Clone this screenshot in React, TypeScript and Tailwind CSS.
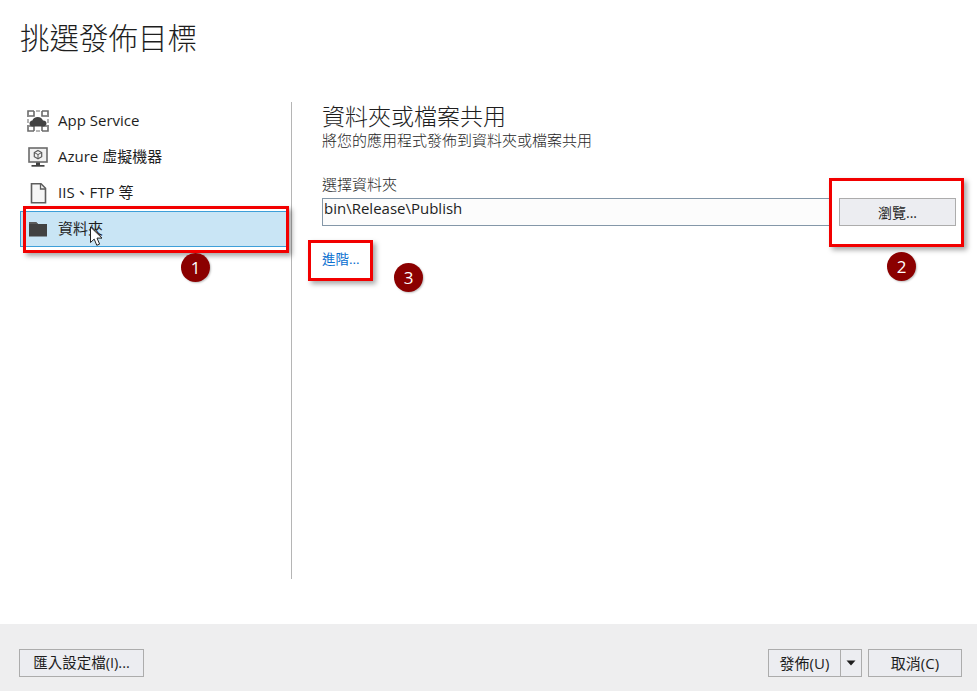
import React from "react";

const font = { fontFamily: '"Open Sans", "Noto Sans CJK TC", sans-serif' };

function AppServiceIcon() {
  return (
    <svg width="24" height="24" viewBox="0 0 24 24" fill="none">
      <g stroke="#6b6b6b" strokeWidth="1.6">
        <path d="M2 8V2h6M16 2h6v6M22 16v6h-6M8 22H2v-6" />
        <path d="M8 2v5H3M16 2v5h5M8 22v-5H3M16 22v-5h5" />
        <path d="M10 2h4M10 22h4M2 10v4M22 10v4" stroke="#a0a0a0" />
      </g>
      <path d="M7 17.500c-2.200 0-3.500-1.300-3.500-3 0-1.600 1.300-2.800 2.900-2.900C7 9.300 9.200 8 11.700 8c2.600 0 4.700 1.500 5.300 3.600 2-.1 3.500 1.200 3.500 3 0 1.600-1.400 2.900-3.200 2.900z" fill="#424242" />
    </svg>
  );
}

function VmIcon() {
  return (
    <svg width="24" height="24" viewBox="0 0 24 24" fill="none">
      <rect x="3" y="3" width="18" height="14" fill="#f1f1f1" stroke="#6b6b6b" strokeWidth="1.600" />
      <path d="M12 5.500l3.700 2v4.200L12 13.800l-3.700-2.100V7.500z" stroke="#5a5a5a" strokeWidth="1.200" />
      <path d="M8.300 7.500l3.700 2.100 3.700-2.100M12 9.600v4.200" stroke="#5a5a5a" strokeWidth="1" />
      <path d="M10 17.500h4v2.500h-4z" fill="#424242" />
      <path d="M5.500 20h13v1.700h-13z" fill="#424242" />
    </svg>
  );
}

function FileIcon() {
  return (
    <svg width="24" height="24" viewBox="0 0 24 24" fill="none">
      <path d="M5.500 2.800h9.500l4.500 4.500v14.500h-14z" fill="#f6f6f6" stroke="#5e5e5e" strokeWidth="1.600" />
      <path d="M14.500 3v5h5" stroke="#5e5e5e" strokeWidth="1.300" />
    </svg>
  );
}

function FolderIcon() {
  return (
    <svg width="24" height="24" viewBox="0 0 24 24" fill="none">
      <path d="M3 5h7l2 2h9v12.500H3z" fill="#424242" />
      <path d="M3 5h7l2 2H3z" fill="#5b5b5b" />
    </svg>
  );
}

function Cursor() {
  return (
    <svg className="absolute left-[89px] top-[226px]" width="16" height="22" viewBox="0 0 16 22">
      <path d="M1.500 1v15.500l3.700-3.400 2.600 6.200 2.800-1.200-2.600-6h5z" fill="#fff" stroke="#222" strokeWidth="1" />
    </svg>
  );
}

function NavItem({ icon, label, selected }: { icon: React.ReactNode; label: string; selected?: boolean }) {
  return (
    <div
      className={
        selected
          ? "flex h-[36px] items-center border border-[#3d9fd9] bg-[#c9e5f5] pl-[5px] text-[15px] text-[#1e1e1e]"
          : "flex h-[36px] items-center border border-transparent pl-[5px] text-[15px] text-[#1e1e1e]"
      }
    >
      <span className="flex w-[32px] shrink-0">{icon}</span>
      <span className="pb-[2px]">{label}</span>
    </div>
  );
}

function Badge({ n, className }: { n: string; className: string }) {
  return (
    <div
      className={
        "absolute flex h-[29px] w-[29px] items-center justify-center rounded-full bg-[#8b0000] text-[17px] text-white shadow-[1px_1px_2px_rgba(0,0,0,0.25)] " +
        className
      }
    >
      {n}
    </div>
  );
}

function RedBox({ className }: { className: string }) {
  return (
    <div
      className={
        "pointer-events-none absolute border-[3px] border-[#f20000] shadow-[3px_3px_5px_rgba(0,0,0,0.35)] " + className
      }
    />
  );
}

function Btn({ children, className }: { children: React.ReactNode; className: string }) {
  return (
    <button
      className={
        "flex h-[28px] items-center justify-center border border-[#acacac] bg-[#ecedf1] text-[#1e1e1e] " + className
      }
    >
      {children}
    </button>
  );
}

export default function App() {
  return (
    <div className="relative flex h-[691px] w-[977px] flex-col overflow-hidden bg-white" style={font}>
      <h1 className="pl-[20px] pt-[16px] text-[29.500px] leading-[44px] font-light text-[#1e1e1e]">挑選發佈目標</h1>

      <div className="mt-[42px] flex h-[477px]">
        <div className="w-[291px] shrink-0 pl-[20px] pr-[2px] pt-[1px]">
          <NavItem icon={<AppServiceIcon />} label="App Service" />
          <NavItem icon={<VmIcon />} label="Azure 虛擬機器" />
          <NavItem icon={<FileIcon />} label="IIS、FTP 等" />
          <NavItem icon={<FolderIcon />} label="資料夾" selected />
        </div>
        <div className="w-px shrink-0 bg-[#b5b5b5]" />
        <div className="flex-1 pl-[30px] pr-[21px]">
          <h2 className="text-[23px] leading-[28px] font-light text-[#1e1e1e]">資料夾或檔案共用</h2>
          <p className="text-[15px] leading-[20px] font-light text-[#1e1e1e]">將您的應用程式發佈到資料夾或檔案共用</p>
          <label className="mt-[24px] block text-[15px] leading-[21px] font-light text-[#1e1e1e]">選擇資料夾</label>
          <div className="mt-[3px] flex gap-[9px]">
            <div className="h-[28px] flex-1 border border-[#8497a8] bg-[#fcfcfc] pl-[1px] text-[15px] leading-[19px] text-[#1e1e1e]">
              bin\Release\Publish
            </div>
            <Btn className="w-[117px] text-[14px]">瀏覽...</Btn>
          </div>
          <a className="mt-[23px] block text-[13.500px] leading-[20px] text-[#0a6fd0]">進階...</a>
        </div>
      </div>

      <div className="mt-auto flex h-[67px] items-start justify-between bg-[#eeeeef] pl-[19px] pr-[15px] pt-[25px]">
        <Btn className="w-[125px] text-[14.500px]">匯入設定檔(I)...</Btn>
        <div className="flex gap-[6px]">
          <div className="flex">
            <Btn className="w-[73px] text-[15px]">發佈(U)</Btn>
            <Btn className="-ml-px w-[22px]">
              <svg width="10" height="6" viewBox="0 0 10 6">
                <path d="M0.500 0.500h9L5 5.500z" fill="#1e1e1e" />
              </svg>
            </Btn>
          </div>
          <Btn className="w-[94px] text-[15px]">取消(C)</Btn>
        </div>
      </div>

      <Cursor />
      <RedBox className="left-[23px] top-[206px] h-[47px] w-[266px]" />
      <RedBox className="left-[829px] top-[178px] h-[69px] w-[135px]" />
      <RedBox className="left-[308px] top-[240px] h-[41px] w-[65px]" />
      <Badge n="1" className="left-[181px] top-[253px]" />
      <Badge n="2" className="left-[887px] top-[252px]" />
      <Badge n="3" className="left-[394px] top-[263px]" />
    </div>
  );
}
